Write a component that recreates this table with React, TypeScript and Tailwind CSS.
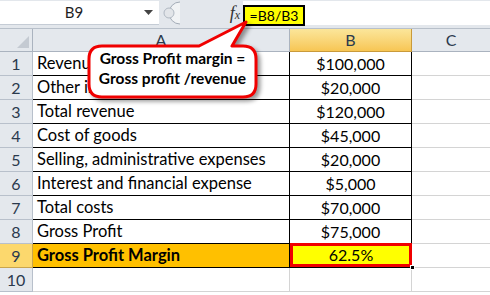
import React from 'react'

const rows: [string, string][] = [
  ['Revenue', '$100,000'],
  ['Other income', '$20,000'],
  ['Total revenue', '$120,000'],
  ['Cost of goods', '$45,000'],
  ['Selling, administrative expenses', '$20,000'],
  ['Interest and financial expense', '$5,000'],
  ['Total costs', '$70,000'],
  ['Gross Profit', '$75,000'],
  ['Gross Profit Margin', '62.5%'],
  ['', ''],
]

function FormulaBar() {
  return (
    <div className="flex h-[29px] bg-[#e3e7ec] border-b border-[#b8c0ca]">
      <div className="flex h-[24px] w-[159px] items-center bg-white border-b border-[#c5ccd5] mt-[1px]">
        <span className="flex-1 text-center text-[15px] text-[#1e1e1e] pl-[4px]">B9</span>
        <svg width="9" height="5" viewBox="0 0 9 5" className="mr-[6px]">
          <path d="M0 0 L9 0 L4.5 5 Z" fill="#444" />
        </svg>
      </div>
      <div className="flex h-[24px] w-[84px] items-center mt-[1px]">
        <svg width="22" height="24" viewBox="0 0 22 24">
          <path d="M21 1 A11 11 0 0 0 21 23" fill="#f1f3f5" stroke="#a3acb7" />
          <circle cx="10" cy="12" r="5" fill="#e2e5e9" stroke="#b0b8c2" />
        </svg>
        <span className="ml-auto mr-[3px] font-['Liberation_Serif'] italic text-[18px] text-[#333] leading-none">
          f<span className="text-[12px]">x</span>
        </span>
      </div>
      <div className="flex flex-1 h-[24px] bg-white mt-[1px]">
        <div className="flex h-[21px] w-[62px] mt-[4px] items-center justify-center bg-[#ffff00] border-2 border-black text-[14px] text-black">
          =B8/B3
        </div>
      </div>
    </div>
  )
}

function Callout() {
  return (
    <div className="absolute left-[80px] top-[15px] w-[190px] h-[95px]">
      <svg width="190" height="95" viewBox="0 0 190 95" className="absolute inset-0" style={{ filter: 'drop-shadow(3px 3px 2px rgba(0,0,0,0.4))' }}>
        <path
          d="M22 31 L119 31 L166 7 L152 31 L163 31 Q176 31 176 44 L176 69 Q176 82 163 82 L22 82 Q9 82 9 69 L9 44 Q9 31 22 31 Z"
          fill="white"
          stroke="#f00000"
          strokeWidth="3"
          strokeLinejoin="round"
        />
      </svg>
      <div className="absolute left-[9px] top-[33px] w-[167px] flex flex-col items-center font-bold text-[15.5px] leading-[20px] text-black">
        <span>Gross Profit margin =</span>
        <span>Gross profit /revenue</span>
      </div>
    </div>
  )
}

export default function App() {
  return (
    <div className="relative w-[490px] h-[295px] overflow-hidden bg-white font-['Lato',sans-serif] text-black">
      <FormulaBar />
      <div className="grid grid-cols-[33px_257px_122px_78px]">
        <div className="h-[23px] bg-[#e4e8ed] border-r border-b border-[#aab3bf] flex items-end justify-end">
          <svg width="12" height="12" viewBox="0 0 12 12" className="mr-[3px] mb-[3px]">
            <path d="M12 0 L12 12 L0 12 Z" fill="#c4cad2" />
          </svg>
        </div>
        <div className="h-[23px] bg-[#e4e8ed] border-r border-b border-[#aab3bf] flex items-center justify-center text-[16px] text-[#2b3a4d]">A</div>
        <div className="h-[23px] bg-gradient-to-b from-[#fbe69a] to-[#f7c653] border-r border-b border-[#c99a3a] flex items-center justify-center text-[16px] text-[#2b3a4d]">B</div>
        <div className="h-[23px] bg-[#e4e8ed] border-b border-[#aab3bf] flex items-center justify-center text-[16px] text-[#2b3a4d]">C</div>
        {rows.map(([label, value], i) => {
          const n = i + 1
          const inTable = n <= 9
          const sel = n === 9
          return (
            <React.Fragment key={n}>
              <div
                className={`h-[24px] border-r border-b flex items-center justify-center text-[16px] text-[#2b3a4d] ${
                  sel ? 'bg-[#fcd86d] border-[#c9a54d]' : 'bg-[#e4e8ed] border-[#b8c0cb]'
                }`}
              >
                {n}
              </div>
              <div
                className={`h-[24px] border-r border-b flex items-center pl-[4px] text-[16.5px] whitespace-nowrap ${
                  inTable ? 'border-black' : 'border-[#d4d4d4]'
                } ${sel ? 'bg-[#ffc000] font-bold' : ''}`}
              >
                {label}
              </div>
              {sel ? (
                <div className="h-[24px] border-b border-black relative">
                  <div className="absolute inset-0 -top-[1px] border-[3px] border-[#f00000] bg-[#ffff00] flex items-center justify-center text-[16px]">
                    {value}
                  </div>
                  <div className="absolute right-[-3px] bottom-[-3px] w-[5px] h-[5px] bg-black border border-white" />
                </div>
              ) : (
                <div
                  className={`h-[24px] border-r border-b flex items-center justify-center text-[16px] ${
                    inTable ? 'border-black' : 'border-[#d4d4d4]'
                  }`}
                >
                  {value}
                </div>
              )}
              <div className="h-[24px] border-b border-[#d4d4d4]" />
            </React.Fragment>
          )
        })}
      </div>
      <Callout />
    </div>
  )
}
